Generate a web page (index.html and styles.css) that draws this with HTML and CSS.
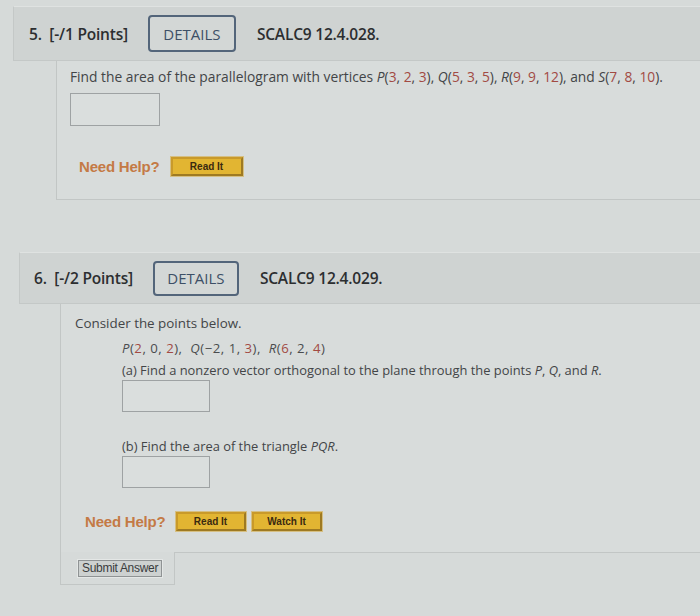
FILE: index.html
```html
<!DOCTYPE html>
<html>
<head>
<meta charset="utf-8">
<link rel="stylesheet" href="styles.css">
</head>
<body>
<div class="page">
  <section class="question q5">
    <div class="qhead">
      <span class="qnum">5.&nbsp; [-/1 Points]</span>
      <span class="details">DETAILS</span>
      <span class="code">SCALC9 12.4.028.</span>
    </div>
    <div class="qbody">
      <p class="prompt wide">Find the area of the parallelogram with vertices <i>P</i>(<span class="n">3</span>, <span class="n">2</span>, <span class="n">3</span>), <i>Q</i>(<span class="n">5</span>, <span class="n">3</span>, <span class="n">5</span>), <i>R</i>(<span class="n">9</span>, <span class="n">9</span>, <span class="n">12</span>), and <i>S</i>(<span class="n">7</span>, <span class="n">8</span>, <span class="n">10</span>).</p>
      <div class="answer a5"></div>
      <div class="help">
        <span class="needhelp">Need Help?</span>
        <span class="hbtn">Read It</span>
      </div>
    </div>
  </section>

  <section class="question q6">
    <div class="qhead">
      <span class="qnum">6.&nbsp; [-/2 Points]</span>
      <span class="details">DETAILS</span>
      <span class="code">SCALC9 12.4.029.</span>
    </div>
    <div class="qbody">
      <p class="prompt">Consider the points below.</p>
      <div class="indent">
        <p class="points"><i>P</i>(<span class="n">2</span>, 0, <span class="n">2</span>), &nbsp;<i>Q</i>(−2, 1, <span class="n">3</span>), &nbsp;<i>R</i>(<span class="n">6</span>, 2, <span class="n">4</span>)</p>
        <p class="part">(a) Find a nonzero vector orthogonal to the plane through the points <i>P</i>, <i>Q</i>, and <i>R</i>.</p>
        <div class="answer aa"></div>
        <p class="part partb">(b) Find the area of the triangle <i>PQR</i>.</p>
        <div class="answer ab"></div>
      </div>
      <div class="help help6">
        <span class="needhelp">Need Help?</span>
        <span class="hbtn">Read It</span>
        <span class="hbtn">Watch It</span>
      </div>
    </div>
    <div class="submitrow">
      <div class="submitcell"><span class="submit">Submit Answer</span></div>
      <div class="submitrest"></div>
    </div>
  </section>
</div>
</body>
</html>
```
FILE: styles.css
```css
html, body {
  margin: 0;
  padding: 0;
}
body {
  background: #d6dad9;
  font-family: "Open Sans", "DejaVu Sans", sans-serif;
  color: #434547;
  width: 700px;
  height: 616px;
  overflow: hidden;
}
.page {
  padding-top: 6px;
}
.qhead {
  display: flex;
  align-items: center;
  background: #cfd3d2;
  border-top: 1px solid #dfe2e1;
  border-bottom: 1px solid #c4c8c7;
  border-left: 1px solid #c4c8c7;
  box-sizing: border-box;
}
.q5 .qhead {
  margin-left: 13px;
  padding-left: 15px;
  height: 55px;
}
.q6 .qhead {
  margin-left: 19px;
  padding-left: 14px;
  height: 52px;
}
.qnum {
  font-weight: 600;
  font-size: 15.5px;
  color: #2c2e30;
  letter-spacing: -0.2px;
}
.details {
  margin-left: 20px;
  width: 88px;
  height: 37px;
  box-sizing: border-box;
  border: 2px solid #53657a;
  border-radius: 4px;
  display: flex;
  align-items: center;
  justify-content: center;
  font-size: 15px;
  color: #3d4f66;
  background: #d3d7d6;
}
.q6 .details {
  width: 86px;
  height: 35px;
}
.code {
  margin-left: 21px;
  font-size: 15.5px;
  font-weight: 600;
  color: #2c2e30;
  letter-spacing: -0.2px;
}
.qbody {
  border-left: 1px solid #c2c6c5;
  background: #d8dcdb;
  box-sizing: border-box;
}
.q5 .qbody {
  margin-left: 56px;
  padding: 8px 0 0 13px;
  height: 139px;
  border-bottom: 1px solid #c2c6c5;
}
.q6 {
  margin-top: 52px;
}
.q6 .qbody {
  margin-left: 60px;
  padding: 11px 0 0 14px;
  height: 248px;
}
p {
  margin: 0;
}
.prompt {
  font-size: 13.4px;
  line-height: 16px;
}
.prompt.wide {
  font-size: 13.8px;
}
.n {
  color: #a24a43;
}
i {
  font-style: italic;
}
.answer {
  width: 90px;
  height: 33px;
  border: 1px solid #9ea2a3;
  background: #dadedd;
  box-sizing: border-box;
}
.a5 {
  margin-top: 8px;
}
.help {
  display: flex;
  align-items: center;
  margin-top: 31px;
  margin-left: 9px;
}
.needhelp {
  font-family: "Liberation Sans", Arial, sans-serif;
  font-weight: bold;
  font-size: 15px;
  color: #c47a45;
  margin-right: 11px;
  letter-spacing: -0.2px;
}
.hbtn {
  display: inline-flex;
  align-items: center;
  justify-content: center;
  width: 72px;
  height: 19px;
  box-sizing: border-box;
  background: #e2b532;
  border: 2px solid #c99a2a;
  border-right-color: #9e7a22;
  border-bottom-color: #9e7a22;
  font-family: "Liberation Sans", Arial, sans-serif;
  font-weight: bold;
  font-size: 10px;
  color: #3a2a10;
  margin-right: 6px;
  outline: 1px solid #d6bf82;
}
.help6 .hbtn {
  width: 70px;
}
.help6 .needhelp {
  margin-right: 10px;
}
.indent {
  margin-left: 47px;
  margin-top: 9px;
}
.points {
  font-size: 13.2px;
  line-height: 16px;
  color: #4a4c4e;
  letter-spacing: 0.5px;
}
.part {
  font-size: 12.9px;
  line-height: 16px;
  margin-top: 6px;
}
.aa {
  margin-top: 2px;
  width: 88px;
  height: 32px;
}
.partb {
  margin-top: 26px;
}
.ab {
  margin-top: 2px;
  width: 88px;
  height: 32px;
}
.help6 {
  margin-top: 24px;
  margin-left: 10px;
}
.submitrow {
  display: flex;
  margin-left: 60px;
}
.submitcell {
  display: flex;
  align-items: flex-start;
  width: 115px;
  height: 33px;
  box-sizing: border-box;
  padding: 8px 0 0 17px;
  border-left: 1px solid #c2c6c5;
  border-bottom: 1px solid #c2c6c5;
  border-right: 1px solid #c2c6c5;
}
.submitrest {
  flex: 1;
  border-top: 1px solid #c2c6c5;
}
.submit {
  display: block;
  white-space: nowrap;
  font-family: "Liberation Sans", Arial, sans-serif;
  font-size: 12px;
  line-height: 15px;
  color: #3a3c3d;
  padding: 0 3px;
  border: 1px solid #8f9394;
  background: #cdd1d0;
  outline: 1px solid #e4e7e6;
  letter-spacing: -0.3px;
}
```
